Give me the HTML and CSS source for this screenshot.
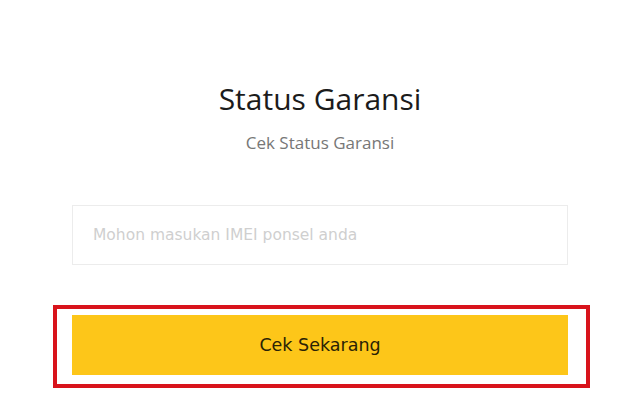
FILE: index.html
```html
<!DOCTYPE html>
<html lang="id">
<head>
  <meta charset="UTF-8">
  <title>Status Garansi</title>
  <link rel="stylesheet" href="styles.css">
</head>
<body>
  <div class="warranty">
    <h1>Status Garansi</h1>
    <p class="subtitle">Cek Status Garansi</p>
    <input class="imei" type="text" placeholder="Mohon masukan IMEI ponsel anda">
    <div class="highlight">
      <button class="check-btn">Cek Sekarang</button>
    </div>
  </div>
</body>
</html>
```

FILE: styles.css
```css
body {
  margin: 0;
  background: #fff;
  font-family: "Open Sans", "Noto Sans", sans-serif;
  color: #222;
}
.warranty {
  width: 496px;
  margin: 0 auto;
  padding-top: 80px;
  display: flex;
  flex-direction: column;
  align-items: stretch;
}
h1 {
  margin: 0;
  font-size: 30px;
  font-weight: 400;
  line-height: 38px;
  text-align: center;
  color: #1b1b1b;
}
.subtitle {
  margin: 14px 0 0;
  font-size: 17px;
  line-height: 22px;
  text-align: center;
  color: #777;
}
.imei {
  box-sizing: border-box;
  margin-top: 51px;
  height: 60px;
  padding: 0 20px;
  border: 1px solid #ececec;
  background: #fff;
  font-family: "DejaVu Sans", Verdana, sans-serif;
  font-size: 15.5px;
  color: #333;
  outline: none;
}
.imei::placeholder {
  color: #cfcfcf;
}
.highlight {
  margin: 40px -22px 0 -19px;
  padding: 6px 18px 9px 15px;
  border: 4px solid #d8131b;
}
.check-btn {
  display: block;
  width: 100%;
  height: 60px;
  border: none;
  background: #fdc619;
  font-family: "DejaVu Sans", Verdana, sans-serif;
  font-size: 17.5px;
  color: #2a2205;
  cursor: pointer;
}
```
